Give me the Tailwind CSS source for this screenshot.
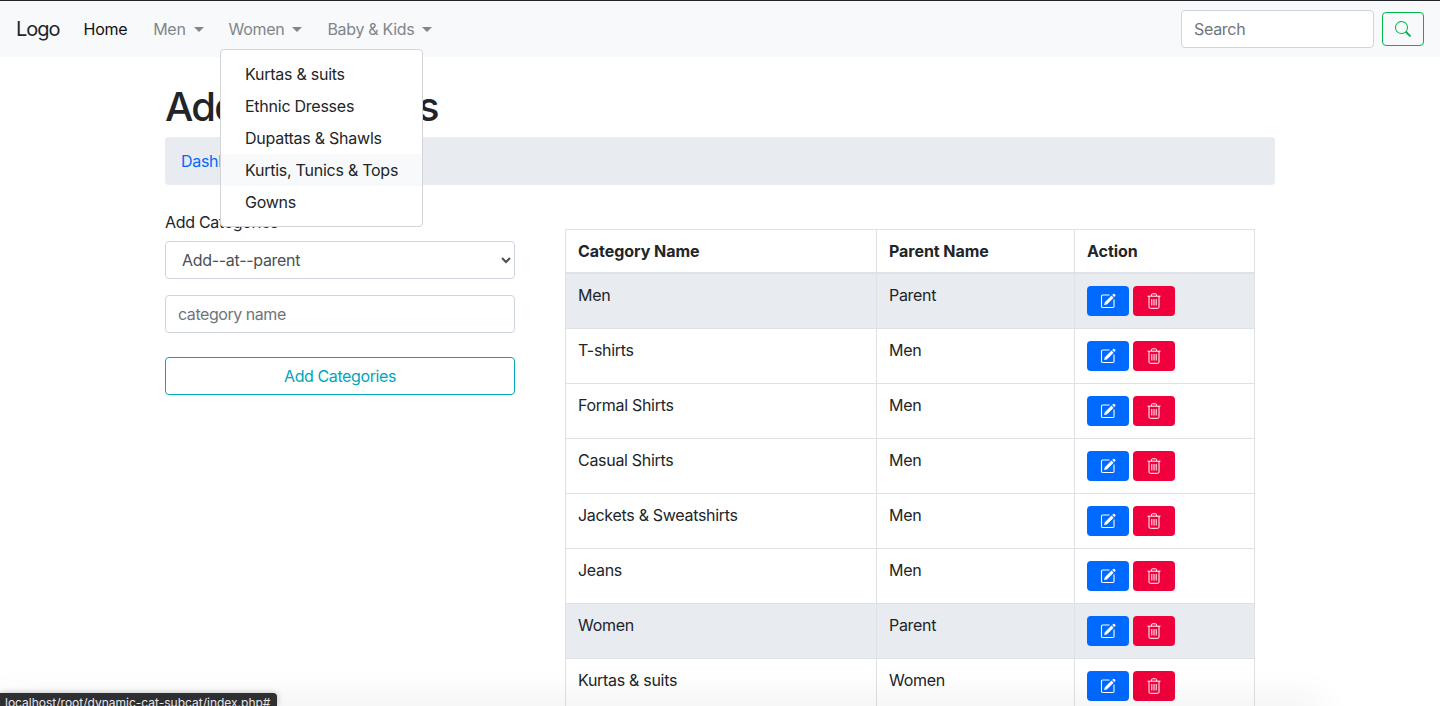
<!DOCTYPE html>
<html>
<head>
<meta charset="utf-8">
<script src="https://cdn.jsdelivr.net/npm/@tailwindcss/browser@4"></script>
<title>Add Categories</title>
</head>
<body class="font-['Inter',sans-serif] text-[#212529] text-base tracking-[-0.3px] bg-white">
<svg class="hidden">
  <symbol id="edit" viewBox="0 0 16 16">
    <path d="M9.5 2H2.6A1.1 1.1 0 0 0 1.5 3.1v10.3a1.1 1.1 0 0 0 1.1 1.1h10.3a1.1 1.1 0 0 0 1.1-1.1V6.5" fill="none" stroke="#fff" stroke-width="1.1"/>
    <path d="M13.2.9a.9.9 0 0 1 1.2 0l.9.9a.9.9 0 0 1 0 1.2l-1 1-2.100-2.100zM11.500 2.600l2.100 2.100-6.700 6.700-2.800.7.700-2.800z" fill="#fff"/>
  </symbol>
  <symbol id="trash" viewBox="0 0 14 16">
    <path d="M.5 3.200h13M4.500 3V1.600a.8.8 0 0 1 .8-.8h3.400a.8.8 0 0 1 .8.8V3M2 3.200v10.900a1.200 1.200 0 0 0 1.200 1.200h7.600a1.200 1.200 0 0 0 1.200-1.200V3.200M4.800 6v6.500M7 6v6.500M9.200 6v6.500" fill="none" stroke="#fff" stroke-width="1"/>
  </symbol>
</svg>
<div class="relative h-[706px] overflow-hidden">
  <nav class="h-[57px] bg-[#f8f9fb] border-t border-t-[#212529] flex items-center pl-4 pr-4">
    <a class="text-[20px] leading-[30px] tracking-[-1px] mr-6 text-[#212529]">Logo</a>
    <a class="text-[#111] mr-[26px]">Home</a>
    <a class="flex items-center text-[#80868b] mr-[25px]">Men<span class="ml-[8px] w-0 h-0 border-x-[5px] border-x-transparent border-t-[5px] border-t-[#80868b]"></span></a>
    <a class="flex items-center text-[#80868b] mr-[25px]">Women<span class="ml-[8px] w-0 h-0 border-x-[5px] border-x-transparent border-t-[5px] border-t-[#80868b]"></span></a>
    <a class="flex items-center text-[#80868b]">Baby &amp; Kids<span class="ml-[8px] w-0 h-0 border-x-[5px] border-x-transparent border-t-[5px] border-t-[#80868b]"></span></a>
    <div class="ml-auto flex items-center gap-2">
      <input class="w-[193px] h-[38px] bg-white border border-[#ced4e0] rounded px-3 placeholder:text-[#6c757d] outline-none" placeholder="Search">
      <button class="w-[42px] h-[34px] border border-[#00b74a] rounded flex items-center justify-center text-[#00b74a]">
        <svg width="16" height="16" viewBox="0 0 16 16" fill="currentColor"><path d="M11.742 10.344a6.5 6.5 0 1 0-1.397 1.398l3.85 3.85a1 1 0 0 0 1.415-1.414l-3.85-3.85zM12 6.500a5.500 5.500 0 1 1-11 0 5.500 5.500 0 0 1 11 0z"/></svg>
      </button>
    </div>
  </nav>

  <main class="px-[165px]">
    <h1 class="mt-[26px] mb-[6px] text-[40px] leading-[48px] font-[550] tracking-[-1.720px]">Add Categories</h1>
    <div class="h-12 bg-[#e8ebf0] rounded px-4 flex items-center text-[#0069ff]"><a>Dashboard</a></div>
    <div class="flex mt-6">
      <form class="w-[350px] shrink-0">
        <label class="block leading-6 pt-px mb-[7px]">Add Categories</label>
        <select class="block w-full h-[38px] bg-white border border-[#ced4e0] rounded pl-3 text-[#495057] outline-none mb-4"><option>Add--at--parent</option></select>
        <input class="block w-full h-[38px] border border-[#ced4e0] rounded px-3 tracking-[-0.45px] placeholder:text-[#6c757d] outline-none mb-6" placeholder="category name">
        <button type="button" class="block w-full h-[38px] border border-[#00a5bd] rounded text-[#00a5bd] tracking-[-0.4px]">Add Categories</button>
      </form>
      <table class="ml-[50px] mt-5 w-[690px] table-fixed border-separate border-spacing-0 self-start">
        <thead>
          <tr class="tracking-[-0.05px]">
            <th class="w-[312px] h-[45px] border border-[#dee2e6] border-b-2 px-3 text-left font-bold">Category Name</th>
            <th class="w-[198px] h-[45px] border-y border-r border-[#dee2e6] border-b-2 px-3 text-left font-bold">Parent Name</th>
            <th class="h-[45px] border-y border-r border-[#dee2e6] border-b-2 px-3 text-left font-bold">Action</th>
          </tr>
        </thead>
        <tbody>
          <tr class="bg-[#e8ebf0]"><td class="h-[55px] border-x border-b border-[#dee2e6] px-3 align-top pt-[9px]">Men</td><td class="border-r border-b border-[#dee2e6] px-3 align-top pt-[9px]">Parent</td><td class="border-r border-b border-[#dee2e6] px-3 align-top pt-3"><div class="flex gap-1"><button class="w-[42px] h-[30px] bg-[#0069ff] rounded flex items-center justify-center"><svg width="16" height="16"><use href="#edit"/></svg></button><button class="w-[42px] h-[30px] bg-[#f0003c] rounded flex items-center justify-center"><svg width="14" height="16"><use href="#trash"/></svg></button></div></td></tr>
          <tr><td class="h-[55px] border-x border-b border-[#dee2e6] px-3 align-top pt-[9px]">T-shirts</td><td class="border-r border-b border-[#dee2e6] px-3 align-top pt-[9px]">Men</td><td class="border-r border-b border-[#dee2e6] px-3 align-top pt-3"><div class="flex gap-1"><button class="w-[42px] h-[30px] bg-[#0069ff] rounded flex items-center justify-center"><svg width="16" height="16"><use href="#edit"/></svg></button><button class="w-[42px] h-[30px] bg-[#f0003c] rounded flex items-center justify-center"><svg width="14" height="16"><use href="#trash"/></svg></button></div></td></tr>
          <tr><td class="h-[55px] border-x border-b border-[#dee2e6] px-3 align-top pt-[9px]">Formal Shirts</td><td class="border-r border-b border-[#dee2e6] px-3 align-top pt-[9px]">Men</td><td class="border-r border-b border-[#dee2e6] px-3 align-top pt-3"><div class="flex gap-1"><button class="w-[42px] h-[30px] bg-[#0069ff] rounded flex items-center justify-center"><svg width="16" height="16"><use href="#edit"/></svg></button><button class="w-[42px] h-[30px] bg-[#f0003c] rounded flex items-center justify-center"><svg width="14" height="16"><use href="#trash"/></svg></button></div></td></tr>
          <tr><td class="h-[55px] border-x border-b border-[#dee2e6] px-3 align-top pt-[9px]">Casual Shirts</td><td class="border-r border-b border-[#dee2e6] px-3 align-top pt-[9px]">Men</td><td class="border-r border-b border-[#dee2e6] px-3 align-top pt-3"><div class="flex gap-1"><button class="w-[42px] h-[30px] bg-[#0069ff] rounded flex items-center justify-center"><svg width="16" height="16"><use href="#edit"/></svg></button><button class="w-[42px] h-[30px] bg-[#f0003c] rounded flex items-center justify-center"><svg width="14" height="16"><use href="#trash"/></svg></button></div></td></tr>
          <tr><td class="h-[55px] border-x border-b border-[#dee2e6] px-3 align-top pt-[9px]">Jackets &amp; Sweatshirts</td><td class="border-r border-b border-[#dee2e6] px-3 align-top pt-[9px]">Men</td><td class="border-r border-b border-[#dee2e6] px-3 align-top pt-3"><div class="flex gap-1"><button class="w-[42px] h-[30px] bg-[#0069ff] rounded flex items-center justify-center"><svg width="16" height="16"><use href="#edit"/></svg></button><button class="w-[42px] h-[30px] bg-[#f0003c] rounded flex items-center justify-center"><svg width="14" height="16"><use href="#trash"/></svg></button></div></td></tr>
          <tr><td class="h-[55px] border-x border-b border-[#dee2e6] px-3 align-top pt-[9px]">Jeans</td><td class="border-r border-b border-[#dee2e6] px-3 align-top pt-[9px]">Men</td><td class="border-r border-b border-[#dee2e6] px-3 align-top pt-3"><div class="flex gap-1"><button class="w-[42px] h-[30px] bg-[#0069ff] rounded flex items-center justify-center"><svg width="16" height="16"><use href="#edit"/></svg></button><button class="w-[42px] h-[30px] bg-[#f0003c] rounded flex items-center justify-center"><svg width="14" height="16"><use href="#trash"/></svg></button></div></td></tr>
          <tr class="bg-[#e8ebf0]"><td class="h-[55px] border-x border-b border-[#dee2e6] px-3 align-top pt-[9px]">Women</td><td class="border-r border-b border-[#dee2e6] px-3 align-top pt-[9px]">Parent</td><td class="border-r border-b border-[#dee2e6] px-3 align-top pt-3"><div class="flex gap-1"><button class="w-[42px] h-[30px] bg-[#0069ff] rounded flex items-center justify-center"><svg width="16" height="16"><use href="#edit"/></svg></button><button class="w-[42px] h-[30px] bg-[#f0003c] rounded flex items-center justify-center"><svg width="14" height="16"><use href="#trash"/></svg></button></div></td></tr>
          <tr><td class="h-[55px] border-x border-b border-[#dee2e6] px-3 align-top pt-[9px]">Kurtas &amp; suits</td><td class="border-r border-b border-[#dee2e6] px-3 align-top pt-[9px]">Women</td><td class="border-r border-b border-[#dee2e6] px-3 align-top pt-3"><div class="flex gap-1"><button class="w-[42px] h-[30px] bg-[#0069ff] rounded flex items-center justify-center"><svg width="16" height="16"><use href="#edit"/></svg></button><button class="w-[42px] h-[30px] bg-[#f0003c] rounded flex items-center justify-center"><svg width="14" height="16"><use href="#trash"/></svg></button></div></td></tr>
        </tbody>
      </table>
    </div>
  </main>

  <div class="absolute left-[220px] top-[49px] w-[203px] h-[178px] bg-white border border-[#d2d4d8] rounded py-2 z-10 tracking-[-0.25px] whitespace-nowrap">
    <a class="block h-8 leading-8 px-6">Kurtas &amp; suits</a>
    <a class="block h-8 leading-8 px-6">Ethnic Dresses</a>
    <a class="block h-8 leading-8 px-6">Dupattas &amp; Shawls</a>
    <a class="block h-8 leading-8 px-6 bg-[#f8f9fb]">Kurtis, Tunics &amp; Tops</a>
    <a class="block h-8 leading-8 px-6">Gowns</a>
  </div>

  <div class="absolute left-0 top-[706px] w-[1320px] h-2 shadow-[0_0_36px_rgba(0,0,0,0.2)] z-20"></div>
  <div class="absolute left-0 top-[693px] w-[277px] h-[13px] bg-[#2e2f33] rounded-tr-[4px] z-30 overflow-hidden pl-[5px] pt-[2px] text-[#e8e8ea] text-[12px] leading-[16px] tracking-[0px] whitespace-nowrap shadow-[0_0_6px_rgba(0,0,0,0.25)]">localhost/root/dynamic-cat-subcat/index.php#</div>
</div>
</body>
</html>
